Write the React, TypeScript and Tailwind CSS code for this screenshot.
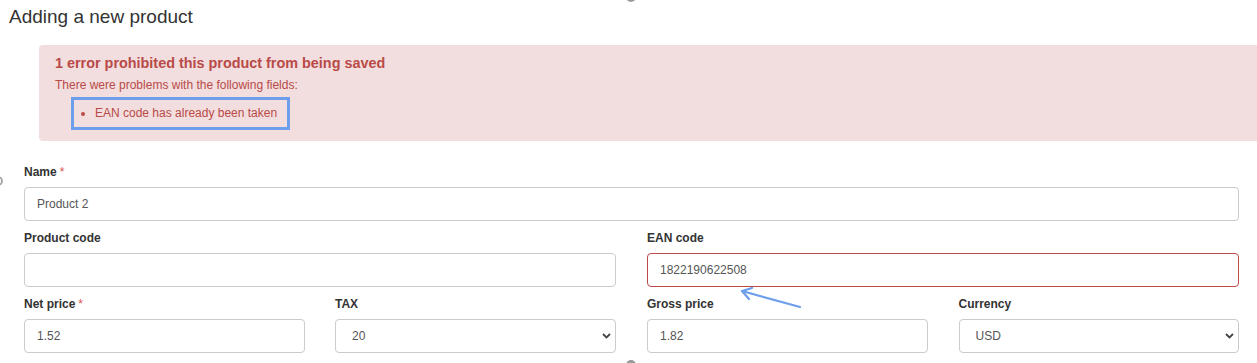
import React from 'react';

const font = "font-['Liberation_Sans',Arial,sans-serif]";

const Label = ({ text, required }: { text: string; required?: boolean }) => (
  <label className="block text-[12px] leading-[17px] font-bold text-[#333] mb-[6px]">
    {text}
    {required && <span className="text-[#d9534f] font-normal ml-[3px]">*</span>}
  </label>
);

const Input = ({ value, error }: { value: string; error?: boolean }) => (
  <input
    readOnly
    value={value}
    className={`block w-full h-[34px] rounded-[4px] border bg-white px-[12px] text-[12px] text-[#555] outline-none ${
      error ? 'border-[#b94a48]' : 'border-[#ccc]'
    }`}
  />
);

const Select = ({ value }: { value: string }) => (
  <div className="relative">
    <select
      value={value}
      onChange={() => {}}
      className="block w-full h-[34px] appearance-none rounded-[4px] border border-[#ccc] bg-white pl-[16px] pr-[24px] text-[12px] text-[#555] outline-none"
    >
      <option value={value}>{value}</option>
    </select>
    <svg
      className="pointer-events-none absolute right-[5px] top-[14px]"
      width="9"
      height="6"
      viewBox="0 0 9 6"
    >
      <path d="M1 1 L4.5 4.5 L8 1" fill="none" stroke="#444" strokeWidth="1.8" />
    </svg>
  </div>
);

const Field = ({ children }: { children: React.ReactNode }) => <div className="mb-[9px]">{children}</div>;

export default function App() {
  return (
    <div className={`${font} relative w-[1257px] h-[363px] overflow-hidden bg-white`}>
      <h1 className="pl-[9px] pt-[5px] text-[19px] leading-[23px] font-normal text-[#333]">Adding a new product</h1>

      <div className="mt-[17px] ml-[39px] -mr-[10px] rounded-[4px] bg-[#f2dede] pl-[16px] pt-[8px] pb-[11px] text-[#b94a48]">
        <h2 className="text-[14.4px] leading-[20px] font-bold">1 error prohibited this product from being saved</h2>
        <p className="mt-[4px] text-[12px] leading-[17px]">There were problems with the following fields:</p>
        <ul className="mt-[3px] ml-[16px] inline-block border-[3px] border-[#6d9eeb] py-[5px] pl-[6px] pr-[10px] text-[12px] leading-[17px]">
          <li className="flex items-center">
            <span className="mr-[10px] ml-[1px] inline-block h-[4px] w-[4px] rounded-full bg-[#b94a48]" />
            EAN code has already been taken
          </li>
        </ul>
      </div>

      <div className="ml-[24px] mr-[18px] mt-[23px]">
        <Field>
          <Label text="Name" required />
          <Input value="Product 2" />
        </Field>
        <div className="grid grid-cols-2 gap-x-[31px]">
          <Field>
            <Label text="Product code" />
            <Input value="" />
          </Field>
          <Field>
            <Label text="EAN code" />
            <Input value="1822190622508" error />
          </Field>
          <div className="grid grid-cols-2 gap-x-[30px]">
            <Field>
              <Label text="Net price" required />
              <Input value="1.52" />
            </Field>
            <Field>
              <Label text="TAX" />
              <Select value="20" />
            </Field>
          </div>
          <div className="grid grid-cols-2 gap-x-[31px]">
            <Field>
              <Label text="Gross price" />
              <Input value="1.82" />
            </Field>
            <Field>
              <Label text="Currency" />
              <Select value="USD" />
            </Field>
          </div>
        </div>
      </div>

      {/* annotation arrow */}
      <svg className="pointer-events-none absolute left-[735px] top-[283px]" width="72" height="30" viewBox="0 0 72 30">
        <path d="M65 24 L7 8" stroke="#6d9eeb" strokeWidth="2.2" fill="none" strokeLinecap="round" />
        <path d="M17 5 L7 8 L14 16" stroke="#6d9eeb" strokeWidth="2.2" fill="none" strokeLinecap="round" strokeLinejoin="round" />
      </svg>

      {/* resize handle fragments */}
      <div className="absolute left-[626px] top-[-8px] h-[10px] w-[10px] rounded-full bg-[#999]" />
      <div className="absolute left-[626px] top-[360px] h-[10px] w-[10px] rounded-full bg-[#999]" />
      <div className="absolute left-[-7px] top-[176px] h-[10px] w-[10px] rounded-full border-[2px] border-[#aaa]" />
    </div>
  );
}
